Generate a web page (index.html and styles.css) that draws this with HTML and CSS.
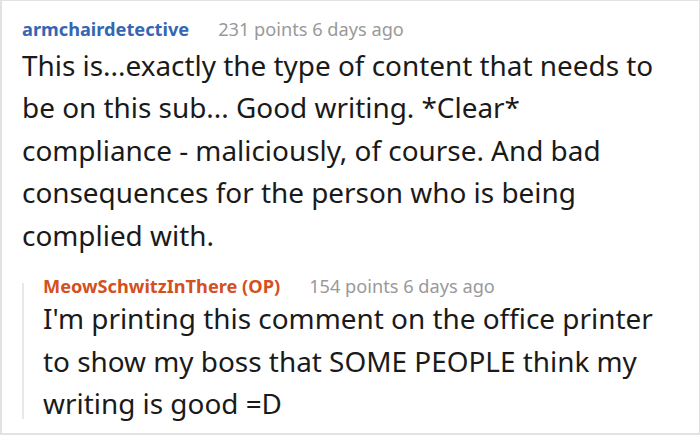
FILE: index.html
```html
<!DOCTYPE html>
<html>
<head>
<meta charset="utf-8">
<link rel="stylesheet" href="styles.css">
</head>
<body>
<div class="frame">
  <div class="comment">
    <div class="meta"><span class="author">armchairdetective</span><span class="score">231 points 6 days ago</span></div>
    <div class="body">This is...exactly the type of content that needs to be on this sub... Good writing. *Clear* compliance - maliciously, of course. And bad consequences for the person who is being complied with.</div>
    <div class="reply">
      <div class="meta"><span class="author op">MeowSchwitzInThere (OP)</span><span class="score">154 points 6 days ago</span></div>
      <div class="body">I'm printing this comment on the office printer to show my boss that SOME PEOPLE think my writing is good =D</div>
    </div>
  </div>
</div>
</body>
</html>
```
FILE: styles.css
```css
html, body {
  margin: 0;
  padding: 0;
  background: #fff;
}
body {
  font-family: "Noto Sans", "Open Sans", sans-serif;
  color: #1a1a1a;
}
.frame {
  box-sizing: border-box;
  width: 700px;
  height: 435px;
  border: 1px solid #e2e2e2;
  border-left-width: 2px;
  border-bottom-width: 2px;
  overflow: hidden;
}
.comment {
  padding: 16px 20px 0 20px;
}
.meta {
  font-size: 18.2px;
  line-height: 24px;
  height: 24px;
  white-space: nowrap;
}
.author {
  font-weight: bold;
  color: #3566b3;
  margin-right: 29px;
}
.author.op {
  color: #d4501d;
}
.score {
  color: #999999;
}
.body {
  margin-top: 2.5px;
  font-size: 27.9px;
  line-height: 42.5px;
  width: 640px;
}
.reply {
  position: relative;
  margin-top: 18px;
  padding-left: 21px;
}
.reply::before {
  content: "";
  position: absolute;
  left: 0;
  top: 9px;
  bottom: 6px;
  width: 2px;
  background: #e8e8e8;
}
.reply .body {
  margin-top: -1px;
  width: 630px;
}
```
